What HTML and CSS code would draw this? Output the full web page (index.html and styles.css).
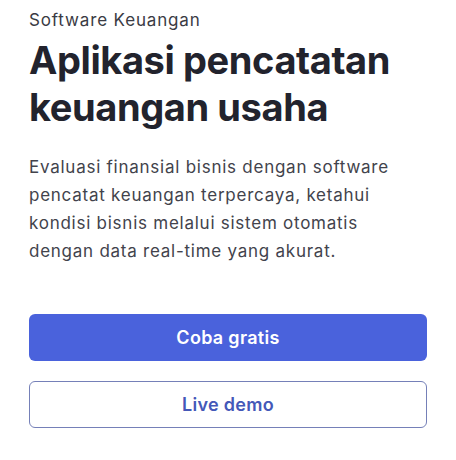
FILE: index.html
```html
<!DOCTYPE html>
<html lang="id">
<head>
<meta charset="utf-8">
<title>Software Keuangan</title>
<link rel="stylesheet" href="styles.css">
</head>
<body>
<main class="hero">
  <p class="eyebrow">Software Keuangan</p>
  <h1 class="title">Aplikasi pencatatan keuangan usaha</h1>
  <p class="lead">Evaluasi finansial bisnis dengan software pencatat keuangan terpercaya, ketahui kondisi bisnis melalui sistem otomatis dengan data real-time yang akurat.</p>
  <div class="actions">
    <a class="btn btn-primary" href="#">Coba gratis</a>
    <a class="btn btn-outline" href="#">Live demo</a>
  </div>
</main>
</body>
</html>
```

FILE: styles.css
```css
html, body {
  margin: 0;
  padding: 0;
  background: #ffffff;
}

body {
  font-family: Inter, "Noto Sans", "Liberation Sans", sans-serif;
  -webkit-font-smoothing: antialiased;
}

.hero {
  padding: 8px 29px 0 29px;
  display: flex;
  flex-direction: column;
}

.eyebrow {
  margin: 0;
  font-size: 17px;
  line-height: 24px;
  font-weight: 400;
  letter-spacing: 0.85px;
  color: #3a3b44;
}

.title {
  margin: 5px 0 0 0;
  font-size: 38px;
  line-height: 47px;
  font-weight: 700;
  color: #22232d;
  letter-spacing: -0.4px;
}

.lead {
  margin: 22px 0 0 0;
  font-size: 17px;
  line-height: 28px;
  font-weight: 400;
  letter-spacing: 0.75px;
  color: #42434c;
}

.actions {
  margin-top: 49px;
  display: flex;
  flex-direction: column;
  gap: 20px;
}

.btn {
  display: flex;
  align-items: center;
  justify-content: center;
  height: 47px;
  box-sizing: border-box;
  border-radius: 6px;
  font-size: 18px;
  font-weight: 600;
  letter-spacing: 0.3px;
  text-decoration: none;
}

.btn-primary {
  background: #4a62dc;
  color: #ffffff;
}

.btn-outline {
  background: #ffffff;
  border: 1.5px solid #7580b8;
  color: #4458b8;
}
```
